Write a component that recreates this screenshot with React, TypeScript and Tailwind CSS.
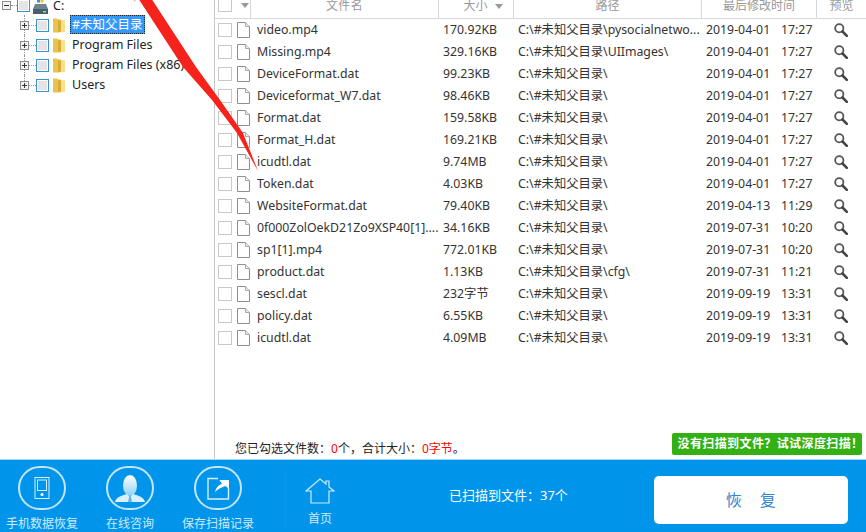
import React from "react";

const FONT = '"Noto Sans", "Noto Sans CJK SC", sans-serif';

const rows: string[][] = [
  ["video.mp4", "170.92KB", "C:\\#未知父目录\\pysocialnetwo...", "2019-04-01", "17:27"],
  ["Missing.mp4", "329.16KB", "C:\\#未知父目录\\UIImages\\", "2019-04-01", "17:27"],
  ["DeviceFormat.dat", "99.23KB", "C:\\#未知父目录\\", "2019-04-01", "17:27"],
  ["Deviceformat_W7.dat", "98.46KB", "C:\\#未知父目录\\", "2019-04-01", "17:27"],
  ["Format.dat", "159.58KB", "C:\\#未知父目录\\", "2019-04-01", "17:27"],
  ["Format_H.dat", "169.21KB", "C:\\#未知父目录\\", "2019-04-01", "17:27"],
  ["icudtl.dat", "9.74MB", "C:\\#未知父目录\\", "2019-04-01", "17:27"],
  ["Token.dat", "4.03KB", "C:\\#未知父目录\\", "2019-04-01", "17:27"],
  ["WebsiteFormat.dat", "79.40KB", "C:\\#未知父目录\\", "2019-04-13", "11:29"],
  ["0f000ZolOekD21Zo9XSP40[1]....", "34.16KB", "C:\\#未知父目录\\", "2019-07-31", "10:20"],
  ["sp1[1].mp4", "772.01KB", "C:\\#未知父目录\\", "2019-07-31", "10:20"],
  ["product.dat", "1.13KB", "C:\\#未知父目录\\cfg\\", "2019-07-31", "11:21"],
  ["sescl.dat", "232字节", "C:\\#未知父目录\\", "2019-09-19", "13:31"],
  ["policy.dat", "6.55KB", "C:\\#未知父目录\\", "2019-09-19", "13:31"],
  ["icudtl.dat", "4.09MB", "C:\\#未知父目录\\", "2019-09-19", "13:31"],
];

const FileIcon = () => (
  <svg width="13" height="16" viewBox="0 0 13 16" className="shrink-0">
    <path d="M.5.5h8l4 4v11H.5z" fill="#fff" stroke="#8f8f8f" />
    <path d="M8.500.5v4h4" fill="#eee" stroke="#a8a8a8" />
  </svg>
);

const SearchIcon = () => (
  <svg width="14" height="14" viewBox="0 0 14 14">
    <circle cx="5.300" cy="5.300" r="4.100" fill="#fff" stroke="#555" strokeWidth="1.800" />
    <path d="M8.500 8.500l4.300 4.300" stroke="#444" strokeWidth="2.600" strokeLinecap="round" />
  </svg>
);

const FolderIcon = () => (
  <svg width="14" height="16" viewBox="0 0 14 16" className="shrink-0">
    <path d="M1 1.500h4l1 1v13H1z" fill="#e9c34f" />
    <path d="M6 2l7 1.500V15l-7 .5z" fill="#f6e08c" />
    <path d="M6 2.500l3 1v11l-3 1z" fill="#d9ad35" />
  </svg>
);

const DriveIcon = () => (
  <svg width="17" height="19" viewBox="0 0 17 19" className="shrink-0">
    <rect x="5" y="0" width="3" height="3" fill="#e8593a" />
    <rect x="8.500" y="0" width="3" height="3" fill="#6fb53c" />
    <rect x="5" y="3.500" width="3" height="3" fill="#3c8fdc" />
    <rect x="8.500" y="3.500" width="3" height="3" fill="#f2c230" />
    <path d="M3 8h11l2 5v5H1v-5z" fill="#6f8490" />
    <rect x="1" y="13" width="15" height="5" fill="#46606e" />
    <rect x="11" y="15" width="3" height="1.500" fill="#8fe07a" />
  </svg>
);

const TreeCheck = () => (
  <span className="flex h-[13px] w-[13px] shrink-0 items-center justify-center border border-[#3b93c9] bg-white">
    <span className="h-[9px] w-[9px] bg-[#e4e4e4]" />
  </span>
);

const Expander = ({ sign }: { sign: "+" | "-" }) => (
  <span className="relative h-[9px] w-[9px] shrink-0 border border-[#8d8d8d] bg-[#f3f3f3]">
    <span className="absolute left-[1px] top-[3px] h-px w-[5px] bg-[#333]" />
    {sign === "+" && <span className="absolute left-[3px] top-[1px] h-[5px] w-px bg-[#333]" />}
  </span>
);

const TreeChild = ({ label, selected, last }: { label: string; selected?: boolean; last?: boolean }) => (
  <div className="relative flex h-5 items-center pl-[20px]">
    <span
      className={`absolute left-[24px] top-0 border-l border-dotted border-[#999] ${last ? "h-[10px]" : "h-5"}`}
    />
    <Expander sign="+" />
    <span className="w-[7px] border-t border-dotted border-[#999]" />
    <TreeCheck />
    <span className="ml-[3px] flex">
      <FolderIcon />
    </span>
    {selected ? (
      <span className="-mt-[1px] ml-[4px] border border-dotted border-[#222] bg-[#3399ff] px-[1px] text-white">
        {label}
      </span>
    ) : (
      <span className="-mt-[1px] ml-[5px] px-[1px] text-[#222]">{label}</span>
    )}
  </div>
);

const CircleButton = ({ label, children }: { label: string; children: React.ReactNode }) => (
  <div className="flex w-[88px] flex-col items-center">
    <div className="flex h-[48px] w-[48px] items-center justify-center rounded-full border-2 border-[#c2e6fb]">
      {children}
    </div>
    <span className="mt-[6px] whitespace-nowrap text-[12px] leading-[16px] text-[#cfeafb]">{label}</span>
  </div>
);

export default function App() {
  return (
    <div
      className="relative flex h-[532px] w-[866px] flex-col overflow-hidden bg-white text-[12.3px]"
      style={{ fontFamily: FONT }}
    >
      <div className="flex h-[459px]">
        {/* tree */}
        <div className="w-[214px] shrink-0 overflow-hidden text-[12.5px] leading-[17px]">
          <div className="-mt-[5px]">
            <div className="flex h-5 items-center pl-[2px]">
              <Expander sign="-" />
              <span className="w-[6px] border-t border-dotted border-[#999]" />
              <TreeCheck />
              <span className="ml-[2px] flex">
                <DriveIcon />
              </span>
              <span className="ml-[4px] text-[#222]">C:</span>
            </div>
            <TreeChild label="#未知父目录" selected />
            <TreeChild label="Program Files" />
            <TreeChild label="Program Files (x86)" />
            <TreeChild label="Users" last />
          </div>
        </div>

        {/* file table */}
        <div className="flex min-w-0 flex-1 flex-col border-l border-[#c8c8c8]">
          <div className="flex h-[19px] shrink-0 overflow-hidden border-b border-[#d5d8dc] text-[12px] leading-[18px] text-[#999]">
            <div className="flex h-full w-[35px] items-start gap-[9px] pl-[3px]">
              <span className="-mt-[2px] h-[14px] w-[14px] shrink-0 border border-[#c9c9c9]" />
              <span className="mt-[3px] h-0 w-0 border-x-[4px] border-t-[5px] border-x-transparent border-t-[#999]" />
            </div>
            <div className="flex h-full w-[188px] justify-center border-l border-[#d5d8dc]">
              <span className="-mt-[3px] tracking-[0.4px]">文件名</span>
            </div>
            <div className="flex h-full w-[75px] justify-center gap-[7px] border-l border-[#d5d8dc] pl-[14px]">
              <span className="-mt-[3px]">大小</span>
              <span className="mt-[4px] h-0 w-0 border-x-[4px] border-t-[5px] border-x-transparent border-t-[#999]" />
            </div>
            <div className="flex h-full w-[188px] justify-center border-l border-[#d5d8dc]">
              <span className="-mt-[3px]">路径</span>
            </div>
            <div className="flex h-full w-[115px] justify-center border-l border-[#d5d8dc]">
              <span className="-mt-[3px]">最后修改时间</span>
            </div>
            <div className="flex h-full flex-1 justify-center border-l border-[#d5d8dc]">
              <span className="-mt-[3px]">预览</span>
            </div>
          </div>

          <div className="flex-1">
            {rows.map((r, i) => (
              <div key={i} className="flex h-[22px] items-center whitespace-nowrap text-[#333]">
                <span className="ml-[3px] h-[14px] w-[14px] shrink-0 border border-[#c9c9c9]" />
                <span className="ml-[5px] flex">
                  <FileIcon />
                </span>
                <span className="ml-[7px] w-[186px] overflow-hidden">{r[0]}</span>
                <span className="w-[75px]">{r[1]}</span>
                <span className="w-[188px]">{r[2]}</span>
                <span className="w-[75px]">{r[3]}</span>
                <span className="w-[53px]">{r[4]}</span>
                <span className="flex">
                  <SearchIcon />
                </span>
              </div>
            ))}
          </div>

          <div className="flex h-[30px] shrink-0 items-center justify-between pl-[20px] pr-[4px] text-[12px] text-[#222]">
            <span className="mt-[10px]">
              您已勾选文件数：<span className="text-[#f00]">0</span>个，合计大小：
              <span className="text-[#f00]">0字节</span>。
            </span>
            <span className="flex h-[22px] w-[190px] items-center justify-center whitespace-nowrap rounded-[2px] bg-[#33b014] pl-[7px] text-[12px] font-bold tracking-[0.4px] text-white">
              没有扫描到文件？试试深度扫描！
            </span>
          </div>
        </div>
      </div>

      {/* bottom bar */}
      <div className="flex h-[73px] shrink-0 border-t border-[#9fd6f5] bg-[#0095eb]">
        <div className="-ml-[2px] mr-[23px] flex pt-[6px]">
          <CircleButton label="手机数据恢复">
            <svg width="16" height="22" viewBox="0 0 16 22" fill="none" stroke="#d6effd">
              <rect x="1" y="0.500" width="14" height="21" />
              <rect x="3.500" y="3" width="9" height="10.500" />
              <circle cx="8" cy="17.500" r="1.500" fill="#fff" stroke="none" />
            </svg>
          </CircleButton>
          <CircleButton label="在线咨询">
            <svg width="30" height="27" viewBox="0 0 30 27">
              <defs>
                <linearGradient id="head" x1="0" y1="0" x2="0" y2="1">
                  <stop offset="0" stopColor="#ffffff" />
                  <stop offset="1" stopColor="#8fd2f7" />
                </linearGradient>
              </defs>
              <ellipse cx="15" cy="10.500" rx="7" ry="10.500" fill="url(#head)" />
              <path d="M0 27c1-5 8-7 12-8l3 3 3-3c4 1 11 3 12 8z" fill="#d8f0fe" />
              <path d="M14 22h2l1 5h-4z" fill="#5fb9ef" />
            </svg>
          </CircleButton>
          <CircleButton label="保存扫描记录">
            <svg width="23" height="23" viewBox="0 0 23 23" fill="none">
              <path d="M11 1.500H1V22h20.500V11" stroke="#d6effd" strokeWidth="1.400" />
              <path d="M8 15c1-4 3-7 7-8L12.500 3H22v9l-3.500-3C15 10 11 12 8 15z" fill="#fff" />
            </svg>
          </CircleButton>
        </div>
        <div className="mt-[9px] h-[60px] w-px bg-[#5a7f99]" />
        <div className="ml-[17px] flex w-[34px] flex-col items-center pt-[18px]">
          <svg width="30" height="26" viewBox="0 0 30 26" fill="none" stroke="#cfeafb" strokeWidth="1.200">
            <path d="M1 13L15 1l6 5V3h3v6l5 4h-5v12H6V13z" />
          </svg>
          <span className="mt-[7px] whitespace-nowrap text-[12px] leading-[16px] text-[#cfeafb]">首页</span>
        </div>
        <div className="ml-[112px] flex items-center pb-[1px] pr-[86px] text-[13px] text-white">
          <span className="whitespace-nowrap">已扫描到文件：37个</span>
        </div>
        <div className="mt-[16px] flex h-[48px] w-[194px] items-center justify-center rounded-[5px] bg-white text-[16px] tracking-[18px] text-[#2f86d6]">
          <span className="pl-[18px]">恢复</span>
        </div>
      </div>

      {/* red arrow drawn over the window */}
      <svg className="pointer-events-none absolute left-0 top-0" width="866" height="532">
        <path d="M138 -2L183 67 L212 100 L237 133 L258 171 L243 133 L220 100 L196 67 L151 -2z" fill="#f5231b" />
        <path d="M133 -1h3l-1 3z" fill="#f8a8a0" />
      </svg>
    </div>
  );
}
